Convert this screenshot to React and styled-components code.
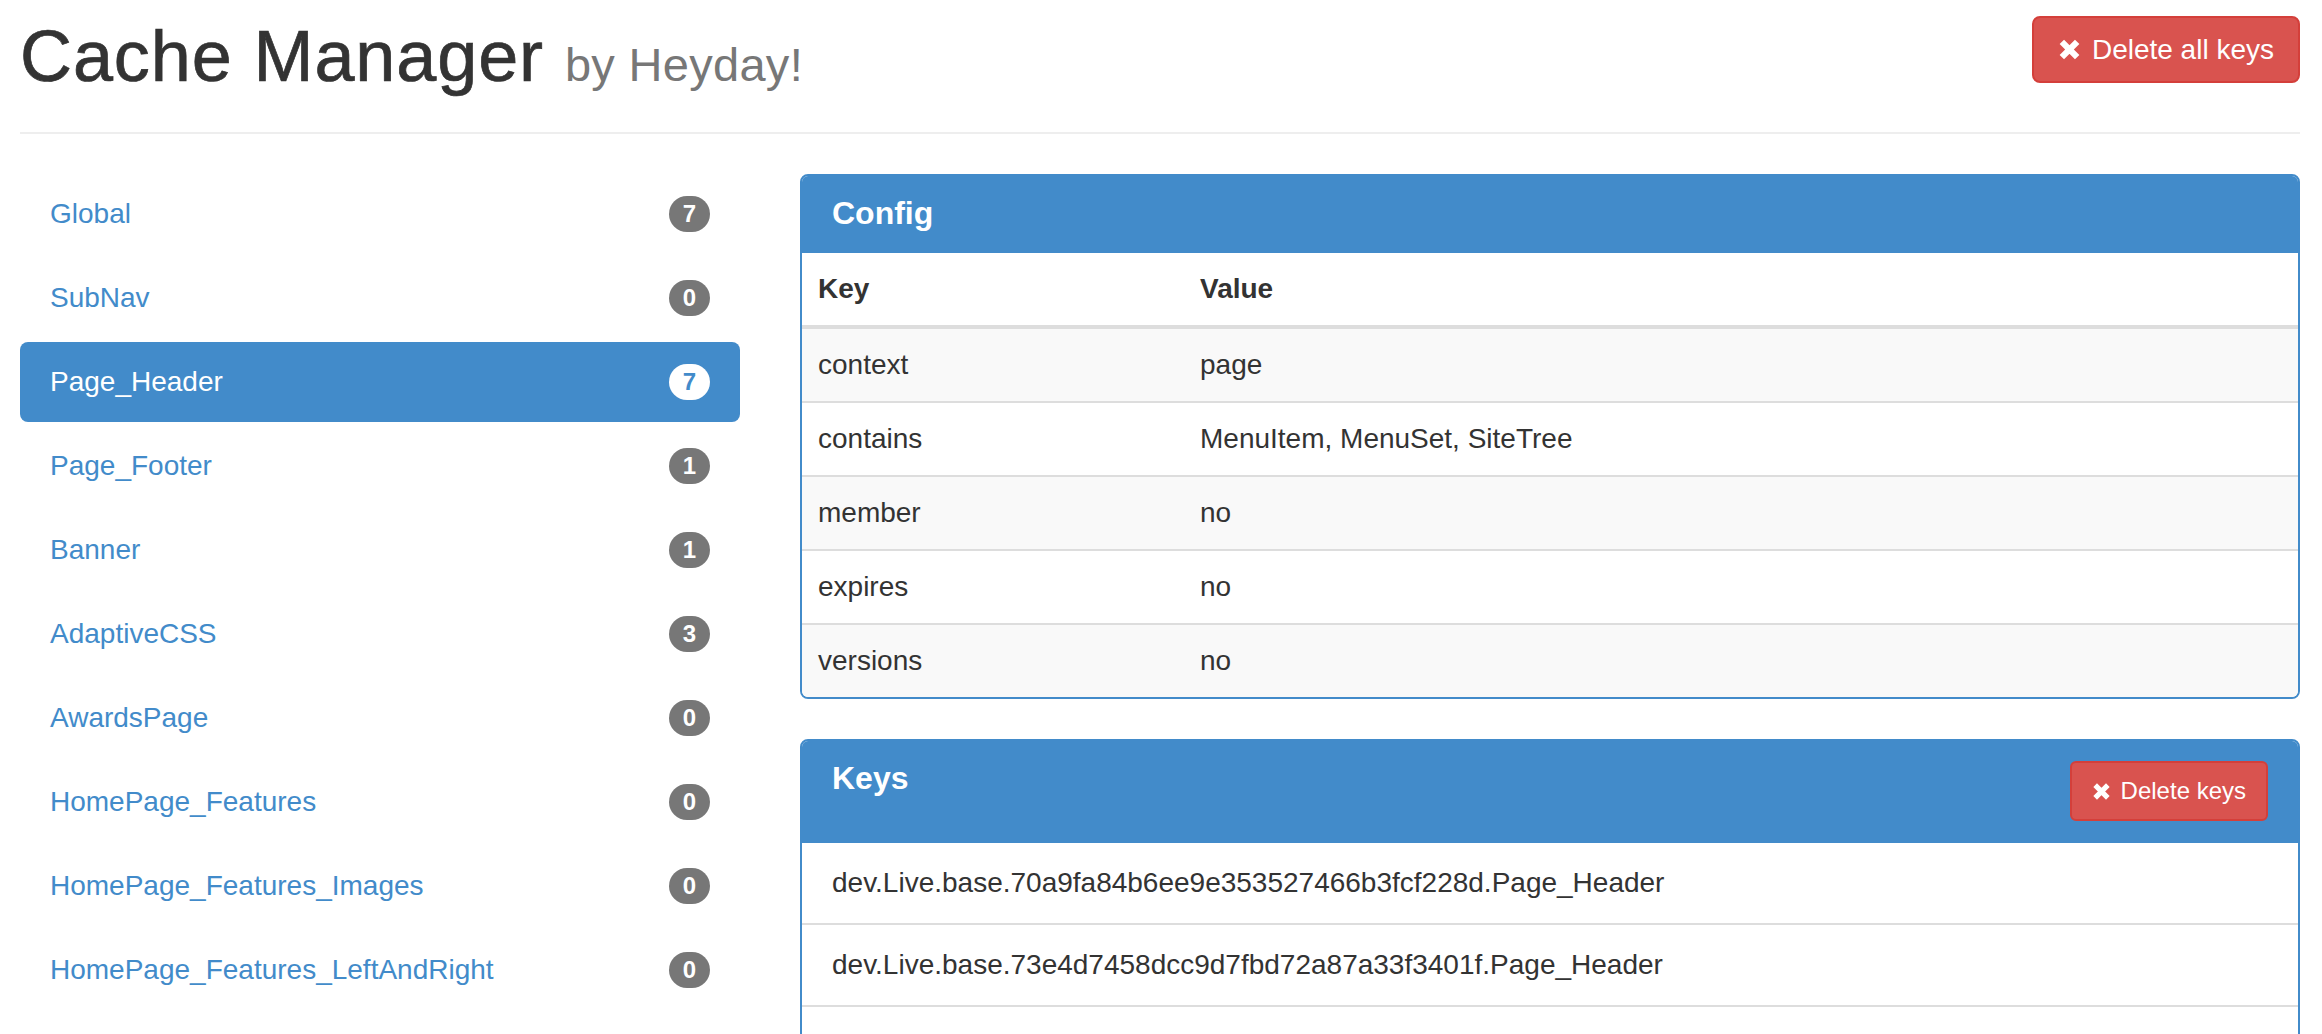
import styled, { createGlobalStyle } from "styled-components";

const GlobalStyle = createGlobalStyle`
  * {
    box-sizing: border-box;
  }
  body {
    margin: 0;
    background: #fff;
  }
`;

const sections = [
  { name: "Global", count: 7 },
  { name: "SubNav", count: 0 },
  { name: "Page_Header", count: 7 },
  { name: "Page_Footer", count: 1 },
  { name: "Banner", count: 1 },
  { name: "AdaptiveCSS", count: 3 },
  { name: "AwardsPage", count: 0 },
  { name: "HomePage_Features", count: 0 },
  { name: "HomePage_Features_Images", count: 0 },
  { name: "HomePage_Features_LeftAndRight", count: 0 },
];

const config = [
  ["context", "page"],
  ["contains", "MenuItem, MenuSet, SiteTree"],
  ["member", "no"],
  ["expires", "no"],
  ["versions", "no"],
];

const keys = [
  "dev.Live.base.70a9fa84b6ee9e353527466b3fcf228d.Page_Header",
  "dev.Live.base.73e4d7458dcc9d7fbd72a87a33f3401f.Page_Header",
  "dev.Live.base.8b1c3e0d5f4a6972ce13d0b7a94f2e65.Page_Header",
];

function RemoveIcon({ size }) {
  return (
    <svg width={size} height={size} viewBox="0 0 24 24" aria-hidden="true">
      <path d="M4 4 L20 20 M20 4 L4 20" stroke="currentColor" strokeWidth="6.5" fill="none" />
    </svg>
  );
}

function App() {
  const current = "Page_Header";

  return (
    <>
      <GlobalStyle />
      <Page>
        <Header>
          <Title>
            Cache Manager <small>by Heyday!</small>
          </Title>
          <DangerButton>
            <RemoveIcon size={23} />
            Delete all keys
          </DangerButton>
        </Header>

        <Main>
          {/* Cache sections */}
          <Nav>
            {sections.map((s) => (
              <Pill key={s.name} $active={s.name === current}>
                <span>{s.name}</span>
                <Badge $active={s.name === current}>{s.count}</Badge>
              </Pill>
            ))}
          </Nav>

          <Content>
            {/* Config */}
            <Panel>
              <PanelHeading>
                <PanelTitle>Config</PanelTitle>
              </PanelHeading>
              <Table>
                <thead>
                  <tr>
                    <th>Key</th>
                    <th>Value</th>
                  </tr>
                </thead>
                <tbody>
                  {config.map(([k, v]) => (
                    <tr key={k}>
                      <td>{k}</td>
                      <td>{v}</td>
                    </tr>
                  ))}
                </tbody>
              </Table>
            </Panel>

            {/* Keys */}
            <Panel>
              <PanelHeading>
                <PanelTitle>Keys</PanelTitle>
                <DangerButton $small>
                  <RemoveIcon size={19} />
                  Delete keys
                </DangerButton>
              </PanelHeading>
              <KeyList>
                {keys.map((k) => (
                  <KeyItem key={k}>{k}</KeyItem>
                ))}
              </KeyList>
            </Panel>
          </Content>
        </Main>
      </Page>
    </>
  );
}

const Page = styled.div`
  padding: 0 22px 0 20px;
  font-family: "Liberation Sans", Arial, sans-serif;
  color: #333;
`;

const Header = styled.header`
  display: flex;
  justify-content: space-between;
  align-items: flex-start;
  height: 134px;
  padding-top: 16px;
  border-bottom: 2px solid #eee;
`;

const Title = styled.h1`
  margin: 1px 0 0;
  font-size: 72px;
  font-weight: 500;
  line-height: 79px;
  letter-spacing: 0.9px;
  -webkit-text-stroke: 0.7px #333;
  color: #333;

  small {
    font-size: 47px;
    font-weight: normal;
    line-height: 1;
    letter-spacing: 0.3px;
    -webkit-text-stroke: 0;
    color: #777;
  }
`;

const DangerButton = styled.button`
  display: inline-flex;
  align-items: center;
  gap: ${(p) => (p.$small ? "10px" : "11px")};
  padding: ${(p) => (p.$small ? "10px 20px" : "12px 24px")};
  font-family: inherit;
  font-size: ${(p) => (p.$small ? "24px" : "28px")};
  line-height: ${(p) => (p.$small ? "36px" : "39px")};
  color: #fff;
  background: #d9534f;
  border: 2px solid #d43f3a;
  border-radius: ${(p) => (p.$small ? "6px" : "8px")};
  cursor: pointer;

  svg {
    flex-shrink: 0;
  }
`;

const Main = styled.main`
  display: grid;
  grid-template-columns: 720px 1fr;
  column-gap: 60px;
  padding-top: 40px;
`;

const Nav = styled.nav`
  display: flex;
  flex-direction: column;
  gap: 4px;
`;

const Pill = styled.a`
  display: flex;
  justify-content: space-between;
  align-items: center;
  padding: 20px 30px;
  font-size: 28px;
  line-height: 40px;
  border-radius: 8px;
  color: ${(p) => (p.$active ? "#fff" : "#428bca")};
  background: ${(p) => (p.$active ? "#428bca" : "transparent")};
  text-decoration: none;
  cursor: pointer;
`;

const Badge = styled.span`
  min-width: 20px;
  padding: 6px 14px;
  font-size: 24px;
  font-weight: bold;
  line-height: 1;
  text-align: center;
  border-radius: 20px;
  color: ${(p) => (p.$active ? "#428bca" : "#fff")};
  background: ${(p) => (p.$active ? "#fff" : "#777")};
`;

const Content = styled.div`
  display: flex;
  flex-direction: column;
  gap: 40px;
`;

const Panel = styled.section`
  border: 2px solid #428bca;
  border-radius: 8px;
  overflow: hidden;
  background: #fff;
`;

const PanelHeading = styled.div`
  display: flex;
  justify-content: space-between;
  align-items: flex-start;
  padding: 20px 30px;
  background: #428bca;
  border-bottom: 2px solid #428bca;
  color: #fff;
`;

const PanelTitle = styled.h3`
  margin: 0;
  font-size: 32px;
  font-weight: bold;
  line-height: 35px;
`;

const Table = styled.table`
  width: 100%;
  border-collapse: collapse;
  font-size: 28px;
  line-height: 40px;

  th,
  td {
    padding: 16px;
    text-align: left;
    vertical-align: top;
  }

  th {
    font-weight: bold;
    border-bottom: 4px solid #ddd;
  }

  th:first-child {
    width: 382px;
  }

  td {
    border-top: 2px solid #ddd;
  }

  tbody tr:nth-child(odd) {
    background: #f9f9f9;
  }
`;

const KeyList = styled.ul`
  margin: 0;
  padding: 0;
  list-style: none;
`;

const KeyItem = styled.li`
  padding: 20px 30px;
  font-size: 28px;
  line-height: 40px;
  border-top: 2px solid #ddd;

  &:first-child {
    border-top: 0;
  }
`;

export default App;
